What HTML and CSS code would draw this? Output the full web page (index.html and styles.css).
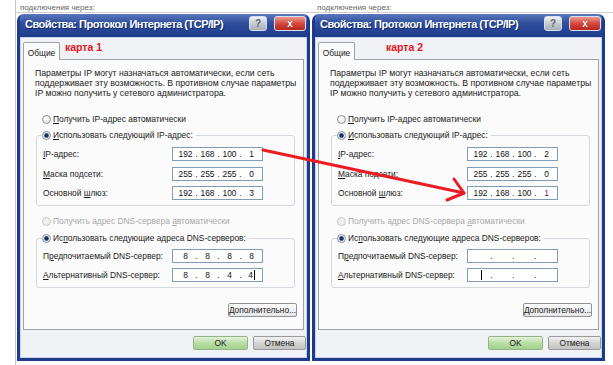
FILE: index.html
```html
<!DOCTYPE html>
<html lang="ru">
<head>
  <meta charset="UTF-8">
  <title>Свойства: Протокол Интернета (TCP/IP)</title>
  <link rel="stylesheet" href="styles.css">
</head>
<body>
  <div class="desk">
    <div class="behind">
      <span class="ghost first">подключения через:</span>
      <span class="ghost">подключения через:</span>
    </div>

    <div class="pair">
      <!-- card 1 -->
      <section class="dlg">
        <div class="title">
          <h1>Свойства: Протокол Интернета (TCP/IP)</h1>
          <span class="tbtn help">?</span>
          <span class="tbtn close">x</span>
        </div>
        <div class="body">
          <div class="tabs">
            <span class="tab">Общие</span>
            <span class="karta">карта 1</span>
          </div>
          <div class="panel">
            <p class="desc">Параметры IP могут назначаться автоматически, если сеть<br>поддерживает эту возможность. В противном случае параметры<br>IP можно получить у сетевого администратора.</p>

            <div class="opt first-opt"><span class="radio"></span><span><u>П</u>олучить IP-адрес автоматически</span></div>

            <fieldset class="group">
              <legend><span class="opt"><span class="radio on"></span><span><u>И</u>спользовать следующий IP-адрес:</span></span></legend>
              <div class="rows">
                <div class="row"><span class="lbl"><u>I</u>P-адрес:</span>
                  <span class="ip"><span>192</span><i>.</i><span>168</span><i>.</i><span>100</span><i>.</i><span>1</span></span></div>
                <div class="row"><span class="lbl"><u>М</u>аска подсети:</span>
                  <span class="ip"><span>255</span><i>.</i><span>255</span><i>.</i><span>255</span><i>.</i><span>0</span></span></div>
                <div class="row"><span class="lbl">Основной <u>ш</u>люз:</span>
                  <span class="ip"><span>192</span><i>.</i><span>168</span><i>.</i><span>100</span><i>.</i><span>3</span></span></div>
              </div>
            </fieldset>

            <div class="opt off dns-auto"><span class="radio"></span><span>Получить адрес DNS-сервера <u>а</u>втоматически</span></div>

            <fieldset class="group dns">
              <legend><span class="opt"><span class="radio on"></span><span>Ис<u>п</u>ользовать следующие адреса DNS-серверов:</span></span></legend>
              <div class="rows">
                <div class="row"><span class="lbl">П<u>р</u>едпочитаемый DNS-сервер:</span>
                  <span class="ip"><span>8</span><i>.</i><span>8</span><i>.</i><span>8</span><i>.</i><span>8</span></span></div>
                <div class="row"><span class="lbl"><u>А</u>льтернативный DNS-сервер:</span>
                  <span class="ip"><span>8</span><i>.</i><span>8</span><i>.</i><span>4</span><i>.</i><span>4<b class="caret"></b></span></span></div>
              </div>
            </fieldset>

            <span class="btn more"><u>Д</u>ополнительно...</span>
          </div>
          <div class="foot">
            <span class="btn ok">OK</span>
            <span class="btn cancel">Отмена</span>
          </div>
        </div>
      </section>

      <!-- card 2 -->
      <section class="dlg">
        <div class="title">
          <h1>Свойства: Протокол Интернета (TCP/IP)</h1>
          <span class="tbtn help">?</span>
          <span class="tbtn close">x</span>
        </div>
        <div class="body">
          <div class="tabs">
            <span class="tab">Общие</span>
            <span class="karta far">карта 2</span>
          </div>
          <div class="panel">
            <p class="desc">Параметры IP могут назначаться автоматически, если сеть<br>поддерживает эту возможность. В противном случае параметры<br>IP можно получить у сетевого администратора.</p>

            <div class="opt first-opt"><span class="radio"></span><span><u>П</u>олучить IP-адрес автоматически</span></div>

            <fieldset class="group">
              <legend><span class="opt"><span class="radio on"></span><span><u>И</u>спользовать следующий IP-адрес:</span></span></legend>
              <div class="rows">
                <div class="row"><span class="lbl"><u>I</u>P-адрес:</span>
                  <span class="ip"><span>192</span><i>.</i><span>168</span><i>.</i><span>100</span><i>.</i><span>2</span></span></div>
                <div class="row"><span class="lbl"><u>М</u>аска подсети:</span>
                  <span class="ip"><span>255</span><i>.</i><span>255</span><i>.</i><span>255</span><i>.</i><span>0</span></span></div>
                <div class="row"><span class="lbl">Основной <u>ш</u>люз:</span>
                  <span class="ip"><span>192</span><i>.</i><span>168</span><i>.</i><span>100</span><i>.</i><span class="sel">1</span></span></div>
              </div>
            </fieldset>

            <div class="opt off dns-auto"><span class="radio"></span><span>Получить адрес DNS-сервера <u>а</u>втоматически</span></div>

            <fieldset class="group dns">
              <legend><span class="opt"><span class="radio on"></span><span>Ис<u>п</u>ользовать следующие адреса DNS-серверов:</span></span></legend>
              <div class="rows">
                <div class="row"><span class="lbl">П<u>р</u>едпочитаемый DNS-сервер:</span>
                  <span class="ip"><span></span><i>.</i><span></span><i>.</i><span></span><i>.</i><span></span></span></div>
                <div class="row"><span class="lbl"><u>А</u>льтернативный DNS-сервер:</span>
                  <span class="ip"><span><b class="caret"></b></span><i>.</i><span></span><i>.</i><span></span><i>.</i><span></span></span></div>
              </div>
            </fieldset>

            <span class="btn more"><u>Д</u>ополнительно...</span>
          </div>
          <div class="foot">
            <span class="btn ok">OK</span>
            <span class="btn cancel">Отмена</span>
          </div>
        </div>
      </section>
    </div>

    <!-- red arrow drawn over both cards -->
    <svg class="arrow" viewBox="0 0 613 365" width="613" height="365">
      <g stroke="#ec1c24" stroke-width="3" stroke-linecap="round" stroke-linejoin="round" fill="none">
        <path d="M263 150 L464 193"/>
        <path d="M454 179 L464 193 L447 200"/>
      </g>
    </svg>
  </div>
</body>
</html>
```

FILE: styles.css
```css
* {
  box-sizing: border-box;
}

body {
  margin: 0;
  background: #fff;
  font-family: "Liberation Sans", Arial, sans-serif;
  font-size: 8.4px;
  color: #1a1a1a;
}

.desk {
  position: relative;
  width: 613px;
  height: 365px;
  overflow: hidden;
  padding-left: 15px;
}

.behind {
  display: flex;
  height: 13px;
  border-left: 1px solid #c4c4c4;
  border-bottom: 1px solid #cfcfcf;
}

.ghost {
  flex: none;
  padding-top: 3px;
  font-size: 8px;
  line-height: 9px;
  color: #666;
}

.ghost.first {
  width: 297px;
  margin-left: 4px;
}

.pair {
  display: flex;
  gap: 2px;
  height: 352px;
  padding: 1px 0 0 1px;
  border-left: 1px solid #c4c4c4;
}

/* dialog window */
.dlg {
  display: flex;
  flex-direction: column;
  width: 293px;
  height: 347px;
  border: 3px solid #1d3b8b;
  border-top: 0;
  border-radius: 7px 7px 0 0;
  background: #f1f2f5;
  overflow: hidden;
}

.title {
  flex: none;
  display: flex;
  align-items: flex-start;
  height: 23px;
  padding: 2px 1px 0 5px;
  background: linear-gradient(#5a78bf, #2f4f9d 40%, #1d3b8b);
  color: #fff;
}

.title h1 {
  flex: 1;
  margin: 2px 0 0;
  font-size: 11px;
  font-weight: bold;
  letter-spacing: -0.5px;
  white-space: nowrap;
  text-shadow: 1px 1px 0 #10296b;
}

.tbtn {
  flex: none;
  height: 15px;
  border: 1px solid #d8deea;
  border-radius: 3px;
  text-align: center;
  line-height: 13px;
  font-weight: bold;
}

.help {
  width: 18px;
  margin-right: 7px;
  background: linear-gradient(#eef0f3, #c2c7cf 55%, #a9afb9);
  color: #606570;
  font-size: 10px;
}

.close {
  width: 32px;
  background: linear-gradient(#f09a90, #d24a40 50%, #b8261e);
  color: #fff;
  font-size: 10px;
  text-shadow: 0 0 1px #7a1010;
}

.body {
  flex: 1;
  display: flex;
  flex-direction: column;
  padding: 5px 3px 0;
  box-shadow: inset 0 0 0 1px #c9d2ea;
}

.tabs {
  display: flex;
  height: 17px;
}

.tab {
  position: relative;
  z-index: 1;
  width: 37px;
  height: 18px;
  padding-top: 5px;
  border: 1px solid #9ea3aa;
  border-bottom: 0;
  border-radius: 2px 2px 0 0;
  background: #fbfbfb;
  text-align: center;
}

.karta {
  margin: 0 0 0 5px;
  color: #e8141c;
  font-size: 10.5px;
  font-weight: bold;
  line-height: 11px;
}

.karta.far {
  margin-left: 31px;
}

.panel {
  display: flex;
  flex-direction: column;
  height: 271px;
  padding: 8px 0 0 11px;
  border: 1px solid #9ea3aa;
  background: #fbfbfb;
}

.desc {
  margin: 0;
  font-size: 8.7px;
  line-height: 10px;
  white-space: nowrap;
}

/* radio options */
.opt {
  display: flex;
  align-items: center;
  gap: 2px;
  height: 12px;
  white-space: nowrap;
}

.panel > .opt {
  margin-left: 7px;
}

.first-opt {
  margin-top: 15px;
}

.dns-auto {
  margin-top: 9px;
}

.opt.off {
  color: #a9a9a9;
}

.radio {
  flex: none;
  width: 9px;
  height: 9px;
  border: 1px solid #8c9095;
  border-radius: 50%;
  background: radial-gradient(circle at 40% 35%, #fff, #dcdde0);
}

.off .radio {
  border-color: #c4c6c9;
  background: #f1f1f1;
}

.radio.on {
  background: radial-gradient(circle, #20304a 0 1.6px, #5f88c4 2.2px, #eef2f6 3px);
}

/* group boxes */
.group {
  margin: 4px 8px 0 1px;
  padding: 0 0 5px 5px;
  border: 1px solid #d3d8de;
  border-radius: 3px;
}

.group.dns {
  margin-top: 5px;
}

.group legend {
  padding: 0 3px 0 0;
}

.rows {
  display: flex;
  flex-direction: column;
  gap: 5.5px;
  margin-top: 6px;
}

.dns .rows {
  gap: 5px;
  margin-top: 5px;
}

.row {
  display: flex;
  align-items: center;
  height: 14px;
}

.lbl {
  width: 130px;
  padding-left: 1px;
  white-space: nowrap;
}

.ip {
  display: flex;
  align-items: center;
  width: 91px;
  height: 14px;
  padding-left: 3px;
  border: 1px solid #7f9db9;
  background: #fff;
  color: #111;
}

.ip span {
  width: 19px;
  text-align: center;
}

.ip i {
  width: 3px;
  font-style: normal;
  text-align: center;
}

.ip .sel {
  color: #5a1a70;
}

.caret {
  display: inline-block;
  width: 1px;
  height: 10px;
  margin-left: 1px;
  background: #000;
  vertical-align: -2px;
}

/* buttons */
.btn {
  display: inline-flex;
  align-items: center;
  justify-content: center;
  height: 14px;
  border: 1px solid #8f9398;
  border-radius: 2px;
  white-space: nowrap;
}

.more {
  align-self: flex-end;
  width: 69px;
  margin: 15px 6px 0 0;
  background: linear-gradient(#fdfdfd, #e6e6e6);
}

.foot {
  display: flex;
  justify-content: flex-end;
  gap: 5px;
  margin-right: -2px;
  padding-top: 6px;
}

.ok {
  width: 55px;
  border-color: #93b588;
  background: linear-gradient(#e4f3da, #b9dea6 50%, #a3d18d);
}

.cancel {
  width: 53px;
  border-color: #9a9a9a;
  background: linear-gradient(#f4f4f4, #d4d4d4 50%, #c2c2c2);
}

.arrow {
  position: absolute;
  left: 0;
  top: 0;
  pointer-events: none;
}
```
